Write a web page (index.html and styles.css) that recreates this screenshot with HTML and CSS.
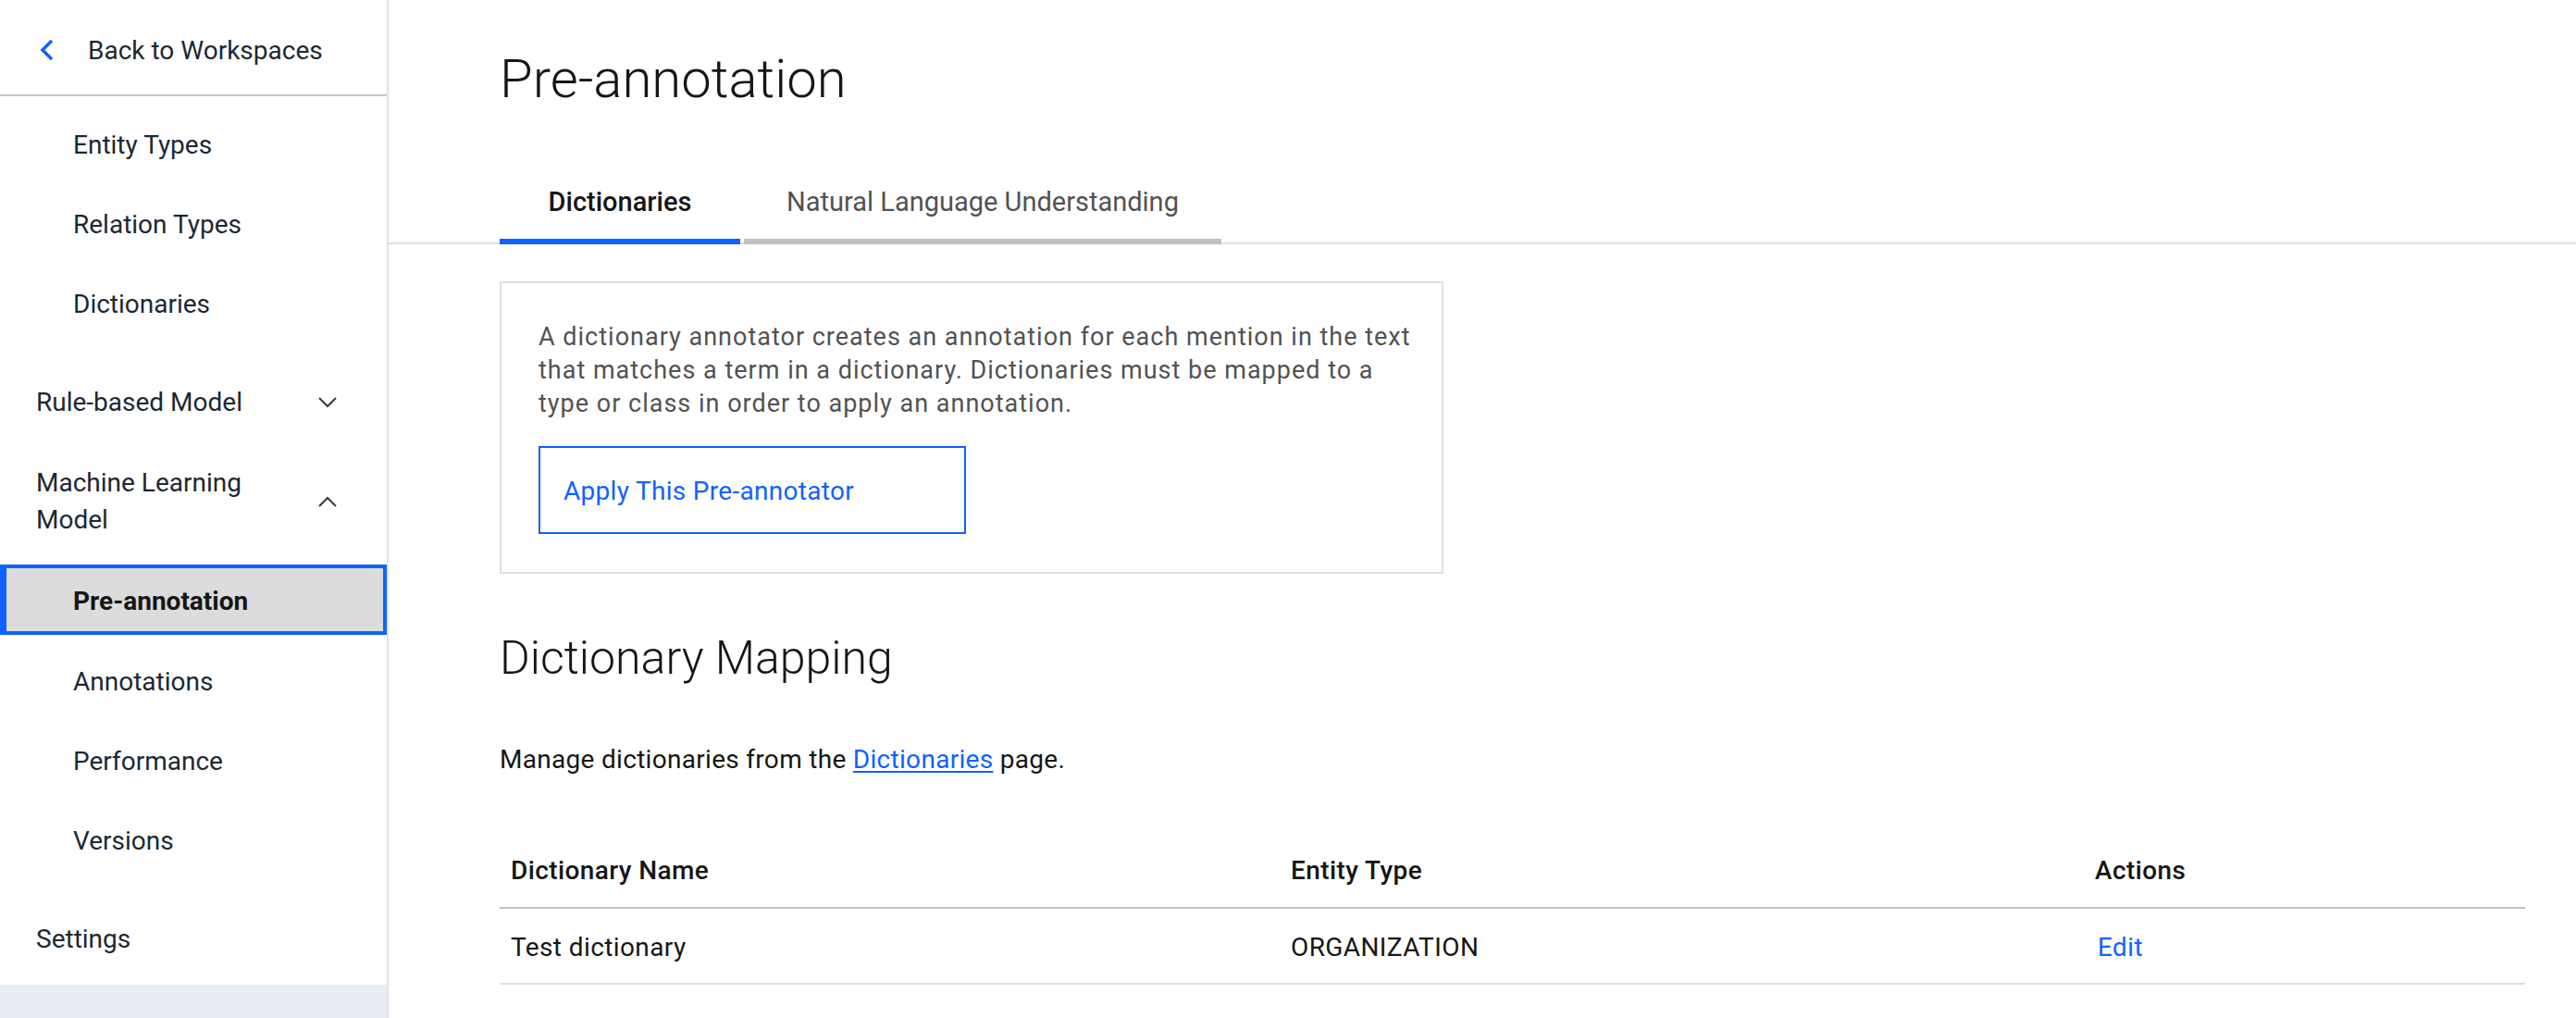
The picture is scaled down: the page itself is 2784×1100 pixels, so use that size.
FILE: index.html
```html
<!DOCTYPE html>
<html lang="en">
<head>
<meta charset="utf-8">
<title>Pre-annotation</title>
<link rel="stylesheet" href="styles.css">
</head>
<body>
<div class="app">
  <nav class="side">
    <a class="back" href="#">
      <svg class="back-icon" width="16" height="24" viewBox="0 0 16 24"><path d="M13 2 L3 12 L13 22" fill="none" stroke="#0f62fe" stroke-width="3.5"/></svg>
      <span>Back to Workspaces</span>
    </a>
    <ul class="sub first">
      <li class="item">Entity Types</li>
      <li class="item">Relation Types</li>
      <li class="item">Dictionaries</li>
    </ul>
    <div class="group">
      <span class="glabel">Rule-based Model</span>
      <svg class="chev" width="20" height="12" viewBox="0 0 20 12"><path d="M1 1 L10 10 L19 1" fill="none" stroke="#393939" stroke-width="2"/></svg>
    </div>
    <div class="group tall">
      <span class="glabel wrap">Machine Learning Model</span>
      <svg class="chev" width="20" height="12" viewBox="0 0 20 12"><path d="M1 11 L10 2 L19 11" fill="none" stroke="#393939" stroke-width="2"/></svg>
    </div>
    <ul class="sub">
      <li class="item active">Pre-annotation</li>
      <li class="item">Annotations</li>
      <li class="item">Performance</li>
      <li class="item">Versions</li>
    </ul>
    <div class="group settings">
      <span class="glabel">Settings</span>
    </div>
    <div class="foot"></div>
  </nav>

  <main class="main">
    <h1 class="title">Pre-annotation</h1>
    <div class="tabs">
      <div class="tab sel t1">Dictionaries</div>
      <div class="tab t2">Natural Language Understanding</div>
    </div>
    <section class="content">
      <div class="info">
        <p class="desc">A dictionary annotator creates an annotation for each mention in the text<br>that matches a term in a dictionary. Dictionaries must be mapped to a<br>type or class in order to apply an annotation.</p>
        <button class="apply">Apply This Pre-annotator</button>
      </div>
      <h2 class="heading">Dictionary Mapping</h2>
      <p class="manage">Manage dictionaries from the <a href="#">Dictionaries</a> page.</p>
      <table class="tbl">
        <colgroup>
          <col class="c1"><col class="c2"><col class="c3">
        </colgroup>
        <thead>
          <tr><th>Dictionary Name</th><th>Entity Type</th><th>Actions</th></tr>
        </thead>
        <tbody>
          <tr><td>Test dictionary</td><td>ORGANIZATION</td><td><a href="#" class="edit">Edit</a></td></tr>
        </tbody>
      </table>
    </section>
  </main>
</div>
</body>
</html>
```

FILE: styles.css
```css
* { box-sizing: border-box; }
html, body { margin: 0; padding: 0; }
body {
  font-family: Roboto, "Liberation Sans", sans-serif;
  color: #161616;
  background: #ffffff;
  width: 2784px;
  height: 1100px;
  overflow: hidden;
}
.app {
  display: flex;
  height: 1100px;
}

/* Sidebar */
.side {
  width: 420px;
  flex: 0 0 420px;
  border-right: 2px solid #dfe3e8;
  display: flex;
  flex-direction: column;
  color: #1c2833;
  font-size: 28px;
}
.back {
  display: flex;
  align-items: center;
  height: 104px;
  padding-top: 6px;
  border-bottom: 2px solid #c6c6c6;
  padding-left: 43px;
  color: #1c2833;
  text-decoration: none;
}
.back-icon { margin-right: 36px; }
.sub {
  list-style: none;
  margin: 0;
  padding: 0;
}
.sub.first { padding-top: 8px; }
.item {
  height: 86px;
  display: flex;
  align-items: center;
  padding-left: 79px;
  padding-top: 2px;
}
.item.active {
  height: 76px;
  margin: 6px 0;
  background: #dcdcdc;
  border: 4px solid #0f62fe;
  border-left-width: 7px;
  padding-left: 72px;
  font-weight: 700;
  color: #161616;
}
.group {
  display: flex;
  align-items: center;
  justify-content: space-between;
  height: 86px;
  padding: 3px 54px 0 39px;
}
.sub.first + .group { margin-top: 20px; }
.group.tall { height: 128px; }
.glabel.wrap {
  width: 262px;
  line-height: 40px;
}
.group.settings { margin-top: 20px; }
.foot {
  margin-top: auto;
  height: 36px;
  background: #e8edf4;
}

/* Main */
.main {
  flex: 1;
  min-width: 0;
}
.title {
  margin: 0;
  padding: 49px 0 0 120px;
  font-size: 58px;
  line-height: 72px;
  font-weight: 300;
  color: #161616;
}
.tabs {
  display: flex;
  gap: 4px;
  margin-top: 57px;
  padding-left: 120px;
  border-bottom: 2px solid #e0e0e0;
}
.tab {
  padding-top: 20px;
  padding-bottom: 20px;
  margin-bottom: -2px;
  font-size: 29px;
  line-height: 40px;
  text-align: center;
  color: #525252;
  border-bottom: 6px solid #c0c0c0;
}
.tab.t1 { width: 260px; }
.tab.t2 { width: 516px; }
.tab.sel {
  color: #161616;
  font-weight: 500;
  border-bottom-color: #0f62fe;
}
.content {
  padding: 40px 55px 0 120px;
}
.info {
  width: 1020px;
  border: 2px solid #e0e0e0;
  padding: 40px 40px 41px 40px;
}
.desc {
  margin: 0;
  font-size: 27px;
  letter-spacing: 1px;
  line-height: 36px;
  color: #525252;
  white-space: nowrap;
}
.apply {
  display: flex;
  align-items: center;
  margin-top: 28px;
  width: 462px;
  height: 95px;
  padding: 2px 0 0 25px;
  background: #ffffff;
  border: 2px solid #0f62fe;
  color: #0f62fe;
  font-family: inherit;
  font-size: 28px;
  letter-spacing: 0.3px;
  text-align: left;
}
.heading {
  margin: 61px 0 0 0;
  font-size: 50px;
  line-height: 60px;
  font-weight: 300;
  color: #161616;
}
.manage {
  margin: 62px 0 0 0;
  font-size: 28px;
  letter-spacing: 0.3px;
  line-height: 36px;
  color: #161616;
}
.manage a {
  color: #0f62fe;
  text-decoration: underline;
  text-underline-offset: 3px;
}
.tbl {
  margin-top: 60px;
  width: 2189px;
  border-collapse: collapse;
  table-layout: fixed;
  font-size: 28px;
  letter-spacing: 0.4px;
}
.c1 { width: 843px; }
.c2 { width: 869px; }
.c3 { width: 477px; }
.tbl th {
  text-align: left;
  font-weight: 500;
  height: 82px;
  padding: 2px 12px 0;
  border-bottom: 2px solid #c0c0c0;
  color: #161616;
}
.tbl td {
  height: 82px;
  padding: 2px 12px 0;
  border-bottom: 2px solid #e0e0e0;
  color: #161616;
}
.edit {
  color: #0f62fe;
  text-decoration: none;
  padding-left: 3px;
}
```
